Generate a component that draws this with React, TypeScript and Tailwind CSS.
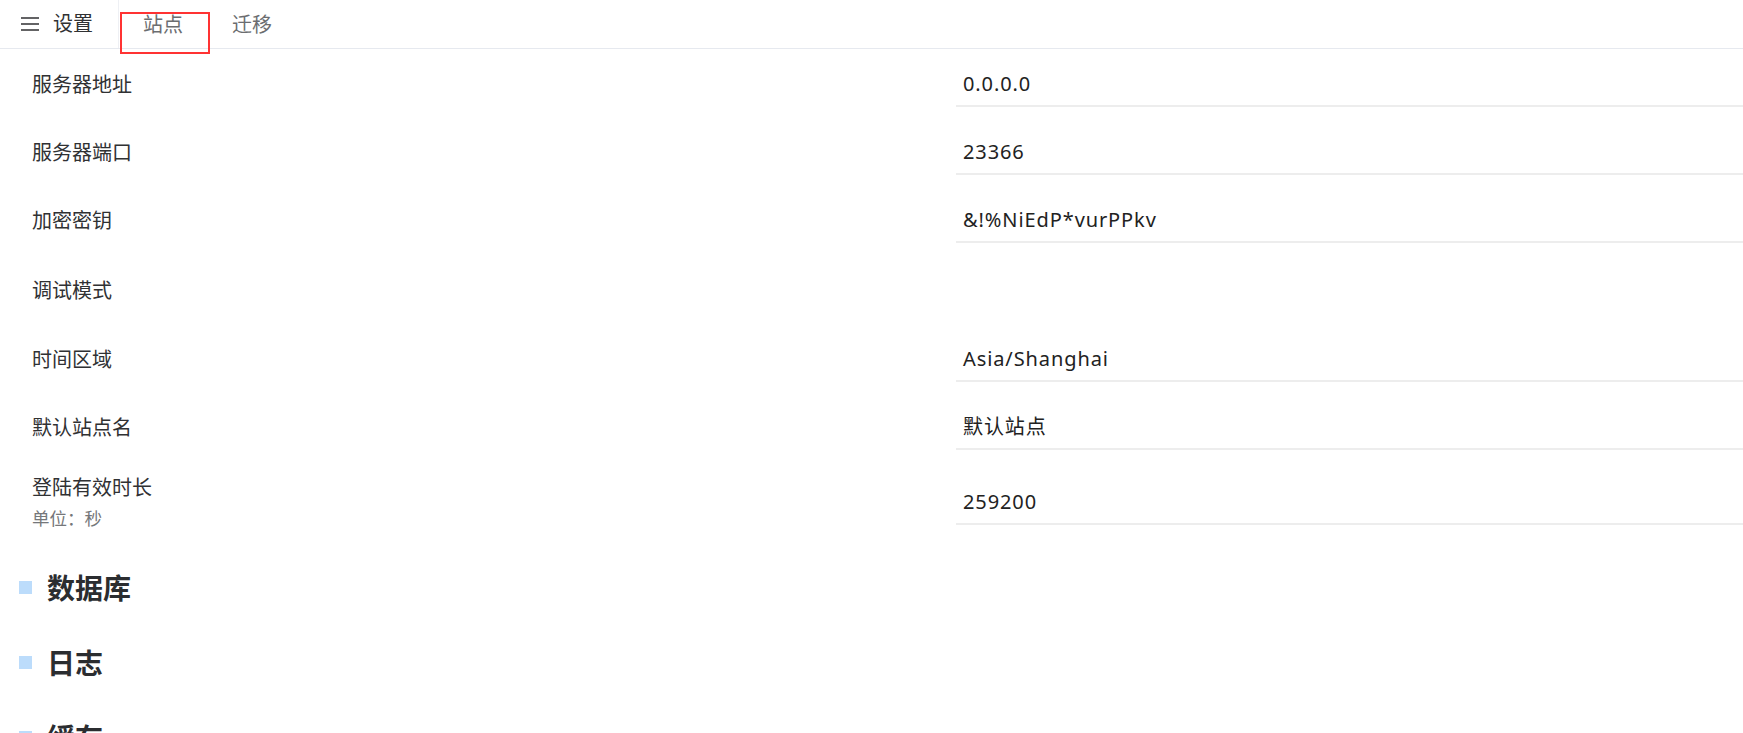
import React from "react";

const rows: { label: string; sub?: string; value?: string; h: string }[] = [
  { label: "服务器地址", value: "0.0.0.0", h: "h-[68px]" },
  { label: "服务器端口", value: "23366", h: "h-[68px]" },
  { label: "加密密钥", value: "&!%NiEdP*vurPPkv", h: "h-[68px]" },
  { label: "调试模式", h: "h-[71px]" },
  { label: "时间区域", value: "Asia/Shanghai", h: "h-[68px]" },
  { label: "默认站点名", value: "默认站点", h: "h-[68px]" },
  { label: "登陆有效时长", sub: "单位：秒", value: "259200", h: "h-[82px]" },
];

const sections = ["数据库", "日志", "缓存"];

export default function App() {
  return (
    <div
      className="w-[1743px] h-[733px] overflow-hidden bg-white text-[#303133] relative"
      style={{ fontFamily: '"Noto Sans", "Noto Sans CJK SC", sans-serif' }}
    >
      {/* header */}
      <div className="h-[49px] flex items-stretch border-b border-[#e6e9ef]">
        <div className="flex items-center w-[119px] border-r border-[#eef0f4]">
          <svg width="18" height="14" viewBox="0 0 18 14" className="ml-[21px]">
            <path d="M0 1h18M0 7h18M0 13h18" stroke="#303133" strokeWidth="1.6" />
          </svg>
          <span className="ml-[14px] text-[20px] leading-none text-[#303133]">设置</span>
        </div>
        <div className="flex items-center text-[20px] text-[#6b6d70] pt-[2px]">
          <span className="pl-[24px] pr-[25px]">站点</span>
          <span className="pl-[24px]">迁移</span>
        </div>
      </div>
      {/* annotation box */}
      <div className="absolute left-[120px] top-[12px] w-[90px] h-[42px] border-2 border-[#ff3333]" />

      {/* form rows */}
      <div className="pt-[2px]">
        {rows.map((r) => (
          <div key={r.label} className={`flex items-center ${r.h}`}>
            <div className="flex-1 pl-[32px]">
              <div className="text-[20px] leading-[30px] text-[#303133]">{r.label}</div>
              {r.sub && (
                <div className="text-[17.5px] leading-[30px] text-[#75777a]">{r.sub}</div>
              )}
            </div>
            <div className="w-[787px]">
              {r.value !== undefined && (
                <div className="h-[44px] flex items-center pl-[7px] border-b-2 border-[#ededed] text-[20px] tracking-[0.9px] text-[#222]">
                  {r.value}
                </div>
              )}
            </div>
          </div>
        ))}
      </div>

      {/* section headings */}
      <div className="mt-[6px]">
        {sections.map((s) => (
          <div key={s} className="h-[75px] flex items-center pl-[19px]">
            <div className="w-[13px] h-[13px] bg-[#bcdcfb]" />
            <div className="ml-[15px] text-[28px] font-bold text-[#2b2d30] leading-none">{s}</div>
          </div>
        ))}
      </div>
    </div>
  );
}
